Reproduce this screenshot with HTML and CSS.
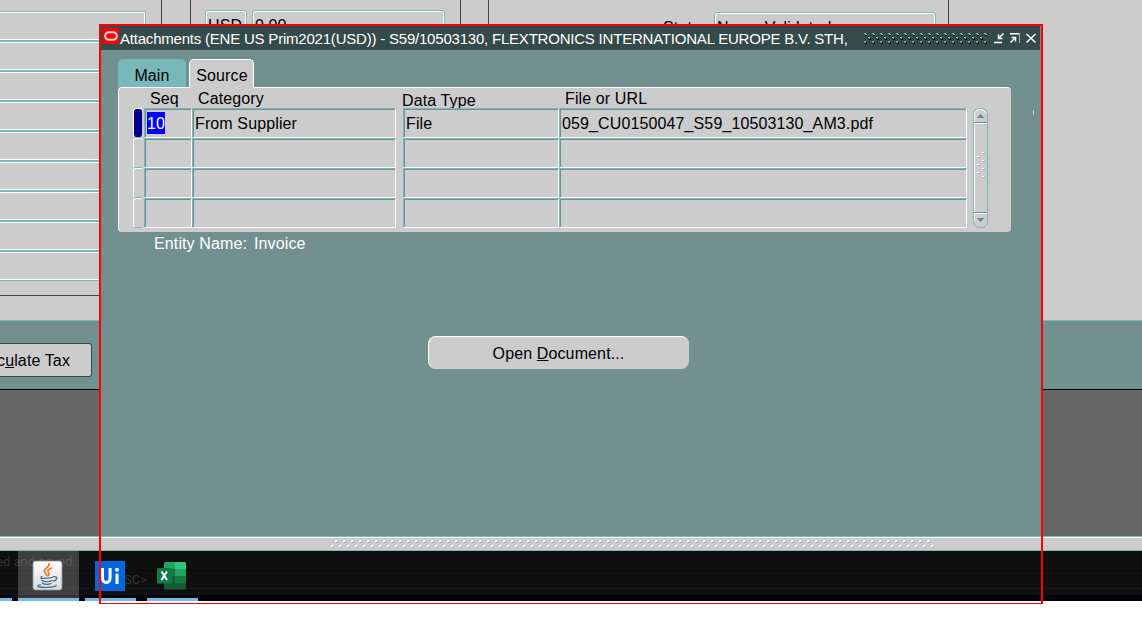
FILE: index.html
```html
<!DOCTYPE html>
<html lang="en">
<head>
<meta charset="utf-8">
<title>Attachments</title>
<link rel="stylesheet" href="styles.css">
</head>
<body>
<div class="screen">
  <div class="form">
    <div class="rows">
      <i class="row first"></i><i class="row"></i><i class="row"></i><i class="row"></i><i class="row"></i><i class="row"></i><i class="row"></i><i class="row"></i><i class="row"></i>
      <i class="rule"></i>
    </div>
    <div class="group g1"></div>
    <div class="group g2"><span class="field usd">USD</span><span class="field amount">0.00</span></div>
    <div class="group g3"></div>
    <div class="group g4"><span class="label">Status</span><span class="field status">Never Validated</span></div>
  </div>
  <div class="actions"><div class="calc"><span>Cal</span>c<u>u</u>late Tax</div></div>
  <div class="desk"></div>
  <div class="statusbar">
    <svg width="604" height="9" viewBox="0 0 604 9" shape-rendering="crispEdges">
      <defs><pattern id="grip" width="8" height="9" patternUnits="userSpaceOnUse">
        <path d="M4 0h3v1h-1v1h-2zM0 5h3v1h-1v1h-2z" fill="#fff"/>
        <path d="M6 1h1v1h-1v1h-1v-1h1zM2 6h1v1h-1v1h-1v-1h1z" fill="#78b8b8"/>
      </pattern></defs>
      <rect width="604" height="9" fill="url(#grip)"/>
    </svg>
  </div>
  <div class="taskbar">
    <span class="ghost saved">ed and saved.</span><span class="ghost osc">SC&gt;</span>
    <div class="task t0"></div>
    <div class="task active">
      <svg width="31" height="31" viewBox="0 0 31 31">
        <defs><linearGradient id="jg" x2="0" y2="1"><stop stop-color="#fff"/><stop offset="1" stop-color="#d9d9d9"/></linearGradient></defs>
        <rect x="1" y="1" width="29" height="29" rx="2.5" fill="url(#jg)" stroke="#8a9399" stroke-width=".8"/>
        <g fill="none" stroke="#e8782a" stroke-width="1.6" stroke-linecap="round"><path d="M17 3.500C18.500 7 11 8.500 12.500 11.800C13.300 13.500 15 14 14.500 15.500"/><path d="M19.500 8C15.500 9.500 15.200 11 16.500 12.500C17.500 14 16.800 15 16 15.600"/></g>
        <g fill="none" stroke="#4d7290" stroke-width="1.3" stroke-linecap="round"><path d="M10 16.700C5 18.700 14 19 20.500 17.400M9.500 20C11 22 17 22 20 20.600M10.500 23C12 24.800 17 24.600 19 23.500"/><path d="M21.500 16.700C26 15.700 25.500 20 21.500 21"/><path d="M8.500 24.700C1 26.700 10 28 18 27.200C22 26.800 24.500 26 24 25.200"/></g>
      </svg>
    </div>
    <div class="task">
      <div class="ui"><svg width="30" height="30" viewBox="0 0 30 30"><path d="M7.500 7v9.500q0 5 3.800 5t3.800-5V7" fill="none" stroke="#fff" stroke-width="3"/><path d="M22 12.500V23" stroke="#fff" stroke-width="3"/><circle cx="22" cy="8.700" r="2" fill="#fff"/></svg></div>
    </div>
    <div class="task excel">
      <svg width="30" height="28" viewBox="0 0 30 28">
        <path d="M7 1.500q0-1.500 1.500-1.500H18v7H7z" fill="#21a366"/><path d="M18 0h9.500Q29 0 29 1.500V7H18z" fill="#33c481"/>
        <path d="M7 7h11v7H7z" fill="#107c41"/><path d="M18 7h11v7H18z" fill="#21a366"/>
        <path d="M7 14h11v7H7z" fill="#185c37"/><path d="M18 14h11v7H18z" fill="#107c41"/>
        <path d="M7 21h22v5q0 1.500-1.500 1.500h-19Q7 27.500 7 26z" fill="#185c37"/>
        <rect y="6" width="15" height="15.500" rx="1.500" fill="#107c41"/>
        <path d="M4.500 9.500l5.500 8.500M10 9.500L4.500 18" stroke="#fff" stroke-width="2"/>
      </svg>
    </div>
  </div>

  <section class="window">
    <header class="titlebar">
      <svg class="logo" width="16" height="16" viewBox="0 0 16 16"><rect width="16" height="16" fill="#f00"/><rect x="2.200" y="4.200" width="11.600" height="7.600" rx="3.800" fill="none" stroke="#ffd6d6" stroke-width="2"/></svg>
      <span class="title">Attachments (ENE US Prim2021(USD)) - S59/10503130, FLEXTRONICS INTERNATIONAL EUROPE B.V. STH,</span>
      <svg class="dots" width="124" height="12" viewBox="0 0 124 12" shape-rendering="crispEdges">
        <defs><pattern id="drag" width="8" height="12" patternUnits="userSpaceOnUse">
          <path d="M2 1h2v2h-2zM2 9h2v2h-2zM6 5h2v2h-2z" fill="#000"/>
          <path d="M1 0h2v1h1v1h-2v-1h-1zM1 8h2v2h-1v-1h-1zM5 4h2v2h-1v-1h-1z" fill="#78b8b8"/>
        </pattern></defs><rect width="124" height="12" fill="url(#drag)"/>
      </svg>
      <svg class="controls" width="43" height="12" viewBox="0 0 43 12" fill="none" stroke="#fff" stroke-width="1.500">
        <path d="M0 9.500h8M9.500.5L5 5M4.500 1.500v4h4"/>
        <path d="M16 .7h9M16.500 9.500L21 5M17.500 4.500h4v4"/><path d="M25.500 0v10" stroke="#aaa" stroke-width="1"/>
        <path d="M32.500 1l9 8.500M41.500 1l-9 8.500"/>
      </svg>
    </header>
    <div class="tabs"><span class="tab main">Main</span><span class="tab source">Source</span></div>
    <div class="panel">
      <div class="table">
        <div class="heads"><span class="h-seq">Seq</span><span class="h-cat">Category</span><span class="h-type">Data Type</span><span class="h-file">File or URL</span></div>
        <div class="record"><i class="mark on"></i><b class="cell seq"><mark>10</mark></b><b class="cell">From Supplier</b><b class="cell type">File</b><b class="cell">059_CU0150047_S59_10503130_AM3.pdf</b></div>
        <div class="record"><i class="mark"></i><b class="cell"></b><b class="cell"></b><b class="cell type"></b><b class="cell"></b></div>
        <div class="record"><i class="mark"></i><b class="cell"></b><b class="cell"></b><b class="cell type"></b><b class="cell"></b></div>
        <div class="record"><i class="mark"></i><b class="cell"></b><b class="cell"></b><b class="cell type"></b><b class="cell"></b></div>
      </div>
      <svg class="scroll" width="15" height="120" viewBox="0 0 15 120">
        <rect x=".5" y=".5" width="14" height="119" rx="6" fill="#ccc" stroke="#78b8b8"/>
        <path d="M1.500 113V7Q1.500 1.500 7 1.500Q12 1.500 13 5" fill="none" stroke="#fff"/>
        <g shape-rendering="crispEdges"><path d="M1 14h13v1H1zM1 104h13v1H1z" fill="#71908f"/><path d="M1 15h13v1H1zM1 105h13v1H1z" fill="#fff"/>
        <path d="M7 6h1v1h1v1h1v1h1v1H4V9h1V8h1V7h1zM4 110h7v1h-1v1H9v1H8v1H7v-1H6v-1H5v-1H4z" fill="#71908f"/>
        <path d="M10 45h2v1h-2zM5 49h2v1H5zM10 53h2v1h-2zM5 57h2v1H5zM10 61h2v1h-2zM5 65h2v1H5zM10 69h2v1h-2z" fill="#78b8b8"/>
        <path d="M9 44h2v1H9zM4 48h2v1H4zM9 52h2v1H9zM4 56h2v1H4zM9 60h2v1H9zM4 64h2v1H4zM9 68h2v1H9z" fill="#fff"/></g>
      </svg>
      <i class="tick"></i>
    </div>
    <p class="entity"><span>Entity Name:</span><span>Invoice</span></p>
    <div class="open"><span>Open <u>D</u>ocument...</span></div>
  </section>
  <div class="outline"></div>
</div>
</body>
</html>
```

FILE: styles.css
```css
* { box-sizing: border-box; }
body { margin: 0; background: #fff; font: 16px/18px "Liberation Sans", Arial, sans-serif; letter-spacing: .12px; color: #000; }
svg { display: block; flex: none; }
i { font-style: normal; }
.screen { position: relative; width: 1142px; height: 629px; overflow: hidden; display: flex; flex-direction: column; }

.form { height: 321px; display: flex; background: #ccc; border-bottom: 1px solid #78b8b8; }
.rows { width: 161px; padding-top: 11px; display: flex; flex-direction: column; }
.row { height: 30px; width: 146px; border: solid #78b8b8; border-width: 1px 1px 1px 0; border-radius: 0 2px 2px 0; box-shadow: inset -1px 0 #fff, inset 0 1px #fff, inset 0 -1px #fff; }
.rule { height: 1px; margin-top: 14px; background: #354a4a; }
.group { border: solid #354a4a; border-width: 0 0 0 1px; }
.g1 { width: 29px; }
.g2 { width: 271px; border-right-width: 1px; padding: 10px 0 0 14px; display: flex; gap: 5px; }
.g3 { width: 28px; border-left: 0; border-right-width: 1px; }
.g4 { width: 460px; border-left: 0; border-right-width: 1px; padding: 12px 12px 0 174px; display: flex; }
.field { height: 30px; border: 1px solid #78b8b8; border-radius: 3px; box-shadow: inset 1px 1px #fff, inset -1px 0 #fff; padding: 6px 2px 0; white-space: nowrap; }
.usd { width: 42px; }
.amount { width: 193px; }
.status { width: 222px; }
.label { width: 51px; padding-top: 7px; }

.actions { height: 69px; background: #71908f; border-bottom: 1px solid #000; padding-top: 22px; }
.calc { width: 92px; height: 34px; background: #ccc; border: 1px solid #354a4a; border-left: 0; border-radius: 0 3px 3px 0; display: flex; justify-content: flex-end; align-items: center; padding: 2px 21px 0 0; white-space: pre; overflow: hidden; }
.desk { height: 146px; background: #666; }
.statusbar { height: 15px; background: #ccc; border: solid #78b8b8; border-width: 1px 0; box-shadow: inset 0 1px #fff; padding: 3px 0 0 331px; }
.taskbar { position: relative; height: 50px; display: flex; gap: 6px; background: linear-gradient(#0f0f0f 0 19px, #080808 19px 20px, #0f0f0f 20px 37px, #101c1d 37px 38px, #0f0f0f 38px 44px, #00060c 44px 48px, #000 48px); }
.task { position: relative; width: 51px; border-bottom: 3px solid #76b9ed; }
.t0 { width: 12px; }
.active { width: 61px; background: rgba(255, 255, 255, .2); padding: 9px 0 0 14px; }
.task .ui { width: 30px; height: 30px; margin: 10px 0 0 10px; background: #0067df; }
.excel { margin-left: 5px; padding: 11px 0 0 10px; }
.ghost { position: absolute; color: #333; font: 13px/16px Roboto, sans-serif; letter-spacing: 0; }
.saved { left: -4px; top: 3px; }
.osc { left: 124px; top: 21px; }

.window { position: absolute; left: 101px; top: 26px; width: 940px; height: 510px; background: #71908f; }
.titlebar { width: 939px; height: 24px; background: #354a4a; color: #fff; display: flex; padding-left: 2px; }
.logo { margin-top: 2px; }
.title { width: 744px; padding: 4px 0 0 1px; font-size: 15px; letter-spacing: -.21px; white-space: nowrap; }
.dots { margin-top: 7px; }
.controls { margin: 7px 0 0 7px; }
.tabs { display: flex; gap: 3px; height: 28px; margin: 9px 0 0 17px; }
.tab { display: flex; justify-content: center; padding-top: 8px; border-radius: 5px 5px 0 0; }
.main { width: 68px; background: #78b8b8; }
.source { width: 65px; height: 29px; background: #ccc; border: solid #fff; border-width: 1px 1px 0; padding: 7px 0 0 1px; z-index: 1; }
.panel { width: 893px; height: 145px; margin-left: 17px; background: #ccc; border: solid #fff; border-width: 1px 0 0 1px; border-radius: 4px; display: flex; padding-left: 14px; }
.table { width: 834px; }
.heads { height: 20px; display: flex; padding: 2px 0 0 17px; }
.h-seq { width: 48px; }
.h-cat { width: 204px; }
.h-type { width: 163px; padding-top: 2px; }
.record { display: grid; grid-template-columns: 11px 48px 204px 163px 408px; height: 30px; }
.cell { font-weight: 400; border: 1px solid; border-color: #78b8b8 #fff #fff #78b8b8; border-radius: 1px; box-shadow: inset 1px 1px #71908f; padding: 6px 0 0 2px; white-space: nowrap; }
.type { margin-left: 7px; }
.mark { margin-right: 1px; border: 1px solid; border-color: #fff #ccc #78b8b8 #fff; border-radius: 3px; }
.on { background: #00008b; background-clip: padding-box; }
mark { display: inline-block; height: 22px; margin-top: -3px; padding-top: 3px; background: #00f; color: #fff; }
.scroll { margin: 20px 0 0 6px; }
.tick { width: 1px; height: 5px; margin: 22px 0 0 45px; background: #ccc; flex: none; }
.entity { margin: 3px 0 0 53px; color: #fff; display: flex; gap: 7px; }
.open { width: 261px; height: 33px; margin: 83px 0 0 327px; background: #ccc; border: solid #fff; border-width: 1px 0 0 1px; border-radius: 8px; display: flex; justify-content: center; align-items: center; padding: 2px 1px 0 0; }
.outline { position: absolute; left: 99px; top: 24px; width: 944px; height: 580px; border: 2px solid #f00; border-bottom-width: 1px; }
```
